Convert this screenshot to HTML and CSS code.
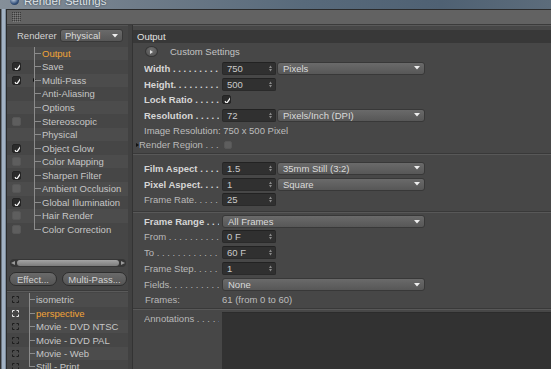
FILE: index.html
```html
<!DOCTYPE html>
<html lang="en">
<head>
    <meta charset="UTF-8">
    <title>Render Settings</title>
    <link rel="stylesheet" href="styles.css">
</head>
<body>
    <div class="titlebar">
        <span class="app-icon"></span>
        <span class="title">Render Settings</span>
    </div>
    <div class="frame">
        <div class="frame-edge"></div>
        <div class="window">
            <div class="toolbar">
                <svg class="grip" width="9" height="10" viewBox="0 0 9 10">
                    <defs>
                        <pattern id="dots" width="2" height="2" patternUnits="userSpaceOnUse">
                            <rect width="1" height="1" fill="#3b3b3b"/>
                            <rect x="1" y="1" width="1" height="1" fill="#7e7e7e"/>
                        </pattern>
                    </defs>
                    <rect width="9" height="10" fill="url(#dots)"/>
                </svg>
            </div>
            <div class="main">
                <aside class="sidebar">
                    <div class="renderer">
                        <span class="renderer-label">Renderer</span>
                        <div class="select small">Physical <svg width="6" height="4"><polygon points="0,0 6,0 3,3.5" fill="#eee"/></svg></div>
                    </div>

                    <ul class="tree">
                        <li><span class="cell"></span><span class="branch"></span><span class="name active">Output</span></li>
                        <li><span class="cell"><span class="tick"></span></span><span class="branch"></span><span class="name">Save</span></li>
                        <li><span class="cell"><span class="tick"></span><span class="arrow"></span></span><span class="branch"></span><span class="name">Multi-Pass</span></li>
                        <li><span class="cell"></span><span class="branch"></span><span class="name">Anti-Aliasing</span></li>
                        <li><span class="cell"></span><span class="branch"></span><span class="name">Options</span></li>
                        <li><span class="cell"><span class="box"></span></span><span class="branch"></span><span class="name">Stereoscopic</span></li>
                        <li><span class="cell"></span><span class="branch"></span><span class="name">Physical</span></li>
                        <li><span class="cell"><span class="tick"></span></span><span class="branch"></span><span class="name">Object Glow</span></li>
                        <li><span class="cell"><span class="box"></span></span><span class="branch"></span><span class="name">Color Mapping</span></li>
                        <li><span class="cell"><span class="tick"></span></span><span class="branch"></span><span class="name">Sharpen Filter</span></li>
                        <li><span class="cell"><span class="box"></span></span><span class="branch"></span><span class="name">Ambient Occlusion</span></li>
                        <li><span class="cell"><span class="tick"></span></span><span class="branch"></span><span class="name">Global Illumination</span></li>
                        <li><span class="cell"><span class="box"></span></span><span class="branch"></span><span class="name">Hair Render</span></li>
                        <li><span class="cell"><span class="box"></span></span><span class="branch"></span><span class="name">Color Correction</span></li>
                    </ul>

                    <div class="hscroll">
                        <span class="scroll-arrow left"></span>
                        <span class="thumb"></span>
                        <span class="scroll-arrow right"></span>
                    </div>

                    <div class="buttons">
                        <button class="pill effect">Effect...</button>
                        <button class="pill multipass">Multi-Pass...</button>
                    </div>

                    <ul class="tree presets">
                        <li><span class="cell"><svg class="cam" width="7" height="7"><path d="M0.5 2.5V0.5H2.5M4.5 0.5H6.5V2.5M6.5 4.5V6.5H4.5M2.5 6.5H0.5V4.5" stroke="#1c1c1c" fill="none"/></svg></span><span class="branch"></span><span class="name">isometric</span></li>
                        <li><span class="cell"><svg class="cam" width="7" height="7"><path d="M0.5 2.5V0.5H2.5M4.5 0.5H6.5V2.5M6.5 4.5V6.5H4.5M2.5 6.5H0.5V4.5" stroke="#ececec" fill="none"/></svg></span><span class="branch"></span><span class="name active">perspective</span></li>
                        <li><span class="cell"><svg class="cam" width="7" height="7"><path d="M0.5 2.5V0.5H2.5M4.5 0.5H6.5V2.5M6.5 4.5V6.5H4.5M2.5 6.5H0.5V4.5" stroke="#1c1c1c" fill="none"/></svg></span><span class="branch"></span><span class="name">Movie - DVD NTSC</span></li>
                        <li><span class="cell"><svg class="cam" width="7" height="7"><path d="M0.5 2.5V0.5H2.5M4.5 0.5H6.5V2.5M6.5 4.5V6.5H4.5M2.5 6.5H0.5V4.5" stroke="#1c1c1c" fill="none"/></svg></span><span class="branch"></span><span class="name">Movie - DVD PAL</span></li>
                        <li><span class="cell"><svg class="cam" width="7" height="7"><path d="M0.5 2.5V0.5H2.5M4.5 0.5H6.5V2.5M6.5 4.5V6.5H4.5M2.5 6.5H0.5V4.5" stroke="#1c1c1c" fill="none"/></svg></span><span class="branch"></span><span class="name">Movie - Web</span></li>
                        <li><span class="cell"><svg class="cam" width="7" height="7"><path d="M0.5 2.5V0.5H2.5M4.5 0.5H6.5V2.5M6.5 4.5V6.5H4.5M2.5 6.5H0.5V4.5" stroke="#1c1c1c" fill="none"/></svg></span><span class="branch"></span><span class="name">Still - Print</span></li>
                    </ul>
                </aside>

                <div class="divider"></div>

                <section class="content">
                    <div class="panel-head">Output</div>

                    <div class="row tall">
                        <span class="round"><svg width="3" height="4"><polygon points="0,0 3,2 0,4" fill="#ddd"/></svg></span>
                        <span class="custom">Custom Settings</span>
                    </div>
                    <div class="row">
                        <span class="label strong">Width . . . . . . . . . . . . . . . . .</span>
                        <div class="num">750 <svg width="3" height="7"><polygon points="0,3 1.5,0.5 3,3" fill="#8a8a8a"/><polygon points="0,4 3,4 1.5,6.5" fill="#8a8a8a"/></svg></div>
                        <div class="select">Pixels <svg width="6" height="4"><polygon points="0,0 6,0 3,3.5" fill="#eee"/></svg></div>
                    </div>
                    <div class="row">
                        <span class="label strong">Height. . . . . . . . . . . . . . . . .</span>
                        <div class="num">500 <svg width="3" height="7"><polygon points="0,3 1.5,0.5 3,3" fill="#8a8a8a"/><polygon points="0,4 3,4 1.5,6.5" fill="#8a8a8a"/></svg></div>
                    </div>
                    <div class="row tight">
                        <span class="label strong">Lock Ratio . . . . . . . . . . . . .</span>
                        <span class="tick"></span>
                    </div>
                    <div class="row">
                        <span class="label strong">Resolution . . . . . . . . . . . . .</span>
                        <div class="num">72 <svg width="3" height="7"><polygon points="0,3 1.5,0.5 3,3" fill="#8a8a8a"/><polygon points="0,4 3,4 1.5,6.5" fill="#8a8a8a"/></svg></div>
                        <div class="select">Pixels/Inch (DPI) <svg width="6" height="4"><polygon points="0,0 6,0 3,3.5" fill="#eee"/></svg></div>
                    </div>
                    <div class="row tight">
                        <span class="text">Image Resolution: 750 x 500 Pixel</span>
                    </div>
                    <div class="row slim">
                        <span class="label region"><span class="arrow"></span>Render Region . . . . . . . . .</span>
                        <span class="box offset"></span>
                    </div>

                    <div class="sep first"></div>

                    <div class="row">
                        <span class="label strong">Film Aspect . . . . . . . . . . .</span>
                        <div class="num">1.5 <svg width="3" height="7"><polygon points="0,3 1.5,0.5 3,3" fill="#8a8a8a"/><polygon points="0,4 3,4 1.5,6.5" fill="#8a8a8a"/></svg></div>
                        <div class="select">35mm Still (3:2) <svg width="6" height="4"><polygon points="0,0 6,0 3,3.5" fill="#eee"/></svg></div>
                    </div>
                    <div class="row">
                        <span class="label strong">Pixel Aspect. . . . . . . . . . .</span>
                        <div class="num">1 <svg width="3" height="7"><polygon points="0,3 1.5,0.5 3,3" fill="#8a8a8a"/><polygon points="0,4 3,4 1.5,6.5" fill="#8a8a8a"/></svg></div>
                        <div class="select">Square <svg width="6" height="4"><polygon points="0,0 6,0 3,3.5" fill="#eee"/></svg></div>
                    </div>
                    <div class="row tight">
                        <span class="label">Frame Rate. . . . . . . . . . . .</span>
                        <div class="num">25 <svg width="3" height="7"><polygon points="0,3 1.5,0.5 3,3" fill="#8a8a8a"/><polygon points="0,4 3,4 1.5,6.5" fill="#8a8a8a"/></svg></div>
                    </div>

                    <div class="sep second"></div>

                    <div class="row tight">
                        <span class="label strong">Frame Range . . . . . . . . . .</span>
                        <div class="select wide">All Frames <svg width="6" height="4"><polygon points="0,0 6,0 3,3.5" fill="#eee"/></svg></div>
                    </div>
                    <div class="row tight">
                        <span class="label">From . . . . . . . . . . . . . . . . . .</span>
                        <div class="num">0 F <svg width="3" height="7"><polygon points="0,3 1.5,0.5 3,3" fill="#8a8a8a"/><polygon points="0,4 3,4 1.5,6.5" fill="#8a8a8a"/></svg></div>
                    </div>
                    <div class="row">
                        <span class="label">To . . . . . . . . . . . . . . . . . . . .</span>
                        <div class="num">60 F <svg width="3" height="7"><polygon points="0,3 1.5,0.5 3,3" fill="#8a8a8a"/><polygon points="0,4 3,4 1.5,6.5" fill="#8a8a8a"/></svg></div>
                    </div>
                    <div class="row tall">
                        <span class="label">Frame Step. . . . . . . . . . . .</span>
                        <div class="num">1 <svg width="3" height="7"><polygon points="0,3 1.5,0.5 3,3" fill="#8a8a8a"/><polygon points="0,4 3,4 1.5,6.5" fill="#8a8a8a"/></svg></div>
                    </div>
                    <div class="row tight">
                        <span class="label">Fields. . . . . . . . . . . . . . . . .</span>
                        <div class="select wide">None <svg width="6" height="4"><polygon points="0,0 6,0 3,3.5" fill="#eee"/></svg></div>
                    </div>
                    <div class="row tight">
                        <span class="label frames">Frames:</span>
                        <span class="text">61 (from 0 to 60)</span>
                    </div>

                    <div class="sep third"></div>

                    <div class="notes-row">
                        <span class="label notes-label">Annotations . . . . . . . . . .</span>
                        <div class="notes"></div>
                    </div>
                </section>
            </div>
        </div>
    </div>
</body>
</html>
```

FILE: styles.css
```css
* {
    box-sizing: border-box;
}
body {
    margin: 0;
    width: 551px;
    height: 369px;
    overflow: hidden;
    display: flex;
    flex-direction: column;
    background-color: #474747;
    font-family: "Liberation Sans", Arial, sans-serif;
    font-size: 9.5px;
    color: #bdbdbd;
}
ul {
    list-style: none;
    margin: 0;
    padding: 0;
}

/* window chrome */
.titlebar {
    height: 9px;
    flex-shrink: 0;
    display: flex;
    align-items: flex-end;
    overflow: hidden;
    padding-left: 10px;
    background: linear-gradient(to right, #858f99, #6f7c89 25%, #586a7b 55%, #4f6173 80%, #5c6c7b);
}
.app-icon {
    width: 9px;
    height: 9px;
    margin-bottom: 4px;
    flex-shrink: 0;
    border-radius: 50%;
    background: radial-gradient(circle at 40% 35%, #c9d6e6, #33507a 60%, #1c2a40);
}
.title {
    margin-left: 5px;
    margin-bottom: 1px;
    font-size: 11.5px;
    line-height: 14px;
    white-space: nowrap;
    color: #dfe3e7;
    text-shadow: 0 0 2px #2a3440;
}
.frame {
    flex: 1;
    display: flex;
    min-height: 0;
}
.frame-edge {
    width: 7px;
    flex-shrink: 0;
    background: linear-gradient(to right, #2e2e2e 0 1px, #6c7682 1px 2px, #a2b2c4 2px 5px, #7b8a9a 5px 6px, #2b2b2b 6px);
}
.window {
    flex: 1;
    display: flex;
    flex-direction: column;
    min-width: 0;
}
.toolbar {
    height: 16px;
    flex-shrink: 0;
    display: flex;
    align-items: center;
    padding-left: 5px;
    background-color: #626262;
    border-top: 1px solid #2b2b2b;
    border-bottom: 1px solid #3b3b3b;
}
.main {
    flex: 1;
    display: flex;
    min-height: 0;
}

/* left side */
.sidebar {
    width: 121px;
    flex-shrink: 0;
    background-color: #464646;
    border-top: 1px solid #545454;
    padding-top: 3px;
}
.renderer {
    height: 13px;
    margin-bottom: 4.5px;
    display: flex;
    align-items: center;
    padding-left: 10px;
}
.renderer-label {
    width: 42px;
    color: #d2d2d2;
}
.tree li {
    height: 13.55px;
    display: flex;
    align-items: stretch;
    background-color: #464646;
}
.tree li:nth-child(odd) {
    background-color: #4c4c4c;
}
.cell {
    width: 27px;
    display: flex;
    align-items: center;
    padding-left: 5px;
}
.branch {
    width: 7px;
    display: flex;
    flex-direction: column;
}
.branch::before,
.branch::after {
    content: "";
    flex: 1;
    border-left: 1px solid #8c8c8c;
}
.branch::before {
    border-bottom: 1px solid #8c8c8c;
}
.tree li:last-child .branch::after {
    border-left: none;
}
.name {
    padding-left: 1px;
    display: flex;
    align-items: center;
    white-space: nowrap;
    color: #c6c6c6;
}
.name.active {
    color: #f2a437;
}
.tick {
    width: 9px;
    height: 9px;
    border-radius: 2px;
    background: #2b2b2b url("data:image/svg+xml,%3Csvg xmlns='http://www.w3.org/2000/svg' width='9' height='9'%3E%3Cpath d='M2 5.2 L3.6 7.4 L7.6 1.6' stroke='%23f4f4f4' stroke-width='1.3' fill='none'/%3E%3C/svg%3E") no-repeat;
    border: 1px solid #242424;
}
.box {
    width: 9px;
    height: 9px;
    border-radius: 2px;
    background-color: #5e5e5e;
    border: 1px solid #575757;
}
.arrow {
    width: 0;
    height: 0;
    border-top: 2.5px solid transparent;
    border-bottom: 2.5px solid transparent;
    border-left: 3px solid #111;
}
.cell .arrow {
    margin-left: auto;
    margin-right: -2px;
}
.hscroll {
    margin: 23px 2px 0 3px;
    height: 8px;
    display: flex;
    align-items: center;
    padding: 0 1px;
    border-radius: 4px;
    background-color: #363636;
}
.thumb {
    flex: 1;
    height: 6px;
    margin: 0 2px;
    border-radius: 3px;
    background: linear-gradient(#a4a4a4, #7c7c7c);
}
.scroll-arrow {
    width: 0;
    height: 0;
    border-top: 2.5px solid transparent;
    border-bottom: 2.5px solid transparent;
}
.scroll-arrow.left {
    border-right: 4px solid #9a9a9a;
}
.scroll-arrow.right {
    border-left: 4px solid #9a9a9a;
}
.buttons {
    display: flex;
    gap: 5px;
    margin-top: 5px;
    padding-left: 2px;
}
.pill {
    height: 14px;
    padding: 0;
    border-radius: 7px;
    border: 1px solid #2e2e2e;
    background: linear-gradient(#6a6a6a, #555);
    color: #d2d2d2;
    font-family: inherit;
    font-size: 9.5px;
}
.effect {
    width: 48px;
}
.multipass {
    width: 65px;
}
.presets {
    margin-top: 4px;
    padding-top: 2px;
    border-top: 1px solid #3a3a3a;
    box-shadow: inset 0 1px 0 #5a5a5a;
}
.presets li {
    height: 13.4px;
}
.presets .cell {
    width: 22px;
}
.presets .branch {
    width: 6px;
}
.cam {
    display: block;
}

.divider {
    width: 5px;
    flex-shrink: 0;
    background-color: #414141;
    border-right: 1px solid #333;
}

/* right side */
.content {
    flex: 1;
    display: flex;
    flex-direction: column;
    min-width: 0;
    border-top: 1px solid #595959;
    padding-top: 4px;
}
.panel-head {
    height: 13px;
    flex-shrink: 0;
    line-height: 13px;
    padding-left: 4px;
    background-color: #383838;
    color: #e2e2e2;
}
.row {
    height: 16px;
    flex-shrink: 0;
    display: flex;
    align-items: center;
    padding-left: 11px;
}
.row.tall {
    height: 17px;
}
.row.tight {
    height: 15px;
}
.row.slim {
    height: 13px;
}
.label {
    width: 75px;
    margin-right: 3px;
    overflow: hidden;
    white-space: nowrap;
    color: #b9b9b9;
}
.label.strong {
    font-weight: bold;
    color: #d6d6d6;
}
.label.region {
    width: 83px;
    margin-left: -8px;
    display: flex;
    align-items: center;
}
.label.region .arrow {
    flex-shrink: 0;
}
.label.frames {
    padding-left: 1px;
}
.text {
    white-space: nowrap;
    color: #bdbdbd;
}
.round {
    width: 13px;
    height: 11px;
    margin-left: 1px;
    display: flex;
    align-items: center;
    justify-content: center;
    border-radius: 50%;
    border: 1px solid #353535;
    background: radial-gradient(circle at 50% 35%, #707070, #4e4e4e);
}
.round svg {
    display: block;
}
.custom {
    margin-left: 12px;
    color: #c4c4c4;
}
.num {
    width: 54px;
    height: 13px;
    display: flex;
    align-items: center;
    justify-content: space-between;
    padding: 0 3px 0 4px;
    border-radius: 2px;
    background-color: #303030;
    border: 1px solid #2a2a2a;
    border-top-color: #222;
    color: #cacaca;
}
.select {
    width: 148px;
    height: 13px;
    margin-left: 1px;
    display: flex;
    align-items: center;
    justify-content: space-between;
    padding: 0 4px 0 5px;
    border-radius: 3px;
    border: 1px solid #383838;
    background: linear-gradient(#6a6a6a, #575757);
    color: #dadada;
    white-space: nowrap;
}
.select.wide {
    width: 203px;
    margin-left: 0;
}
.select.small {
    width: 63px;
    padding-left: 4px;
}
.row .box.offset {
    width: 8px;
    height: 8px;
    margin-left: 2px;
}
.sep {
    flex-shrink: 0;
    height: 2px;
    border-top: 1px solid #393939;
    border-bottom: 1px solid #585858;
}
.sep.first {
    margin: 2px 0 5px;
}
.sep.second {
    margin: 4px 0 1px;
}
.sep.third {
    margin: 1px 0 2px;
}
.notes-row {
    flex: 1;
    display: flex;
    padding-left: 11px;
}
.notes-label {
    line-height: 13px;
}
.notes {
    flex: 1;
    background-color: #323232;
    border-top: 1px solid #2c2c2c;
}
```
